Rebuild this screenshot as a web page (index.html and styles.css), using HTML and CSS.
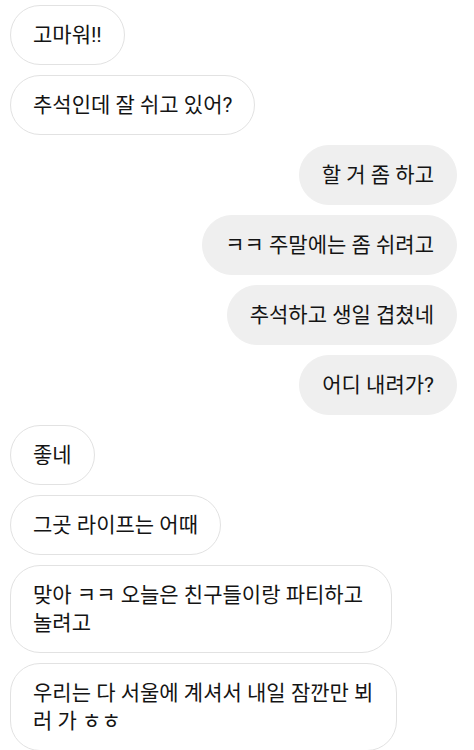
FILE: index.html
```html
<!DOCTYPE html>
<html lang="ko">
<head>
<meta charset="utf-8">
<link rel="stylesheet" href="styles.css">
</head>
<body>
<div class="chat">
  <div class="msg in">고마워!!</div>
  <div class="msg in">추석인데 잘 쉬고 있어?</div>
  <div class="msg out">할 거 좀 하고</div>
  <div class="msg out">ㅋㅋ 주말에는 좀 쉬려고</div>
  <div class="msg out">추석하고 생일 겹쳤네</div>
  <div class="msg out">어디 내려가?</div>
  <div class="msg in">좋네</div>
  <div class="msg in">그곳 라이프는 어때</div>
  <div class="msg in multi">맞아 ㅋㅋ 오늘은 친구들이랑 파티하고<br>놀려고</div>
  <div class="msg in multi wider">우리는 다 서울에 계셔서 내일 잠깐만 뵈<br>러 가 ㅎㅎ</div>
</div>
</body>
</html>
```
FILE: styles.css
```css
html, body {
  margin: 0;
  padding: 0;
  background: #ffffff;
}
body {
  width: 474px;
  height: 750px;
  overflow: hidden;
  font-family: Roboto, "Noto Sans CJK KR", sans-serif;
  font-size: 21px;
  color: #141414;
}
.chat {
  display: flex;
  flex-direction: column;
  gap: 10px;
  padding: 5px 17px 0 10px;
}
.msg {
  box-sizing: border-box;
  padding: 15px 22px;
  line-height: 28px;
  border-radius: 30px;
  border: 1.5px solid #e2e2e2;
  white-space: nowrap;
}
.in {
  align-self: flex-start;
  background: #ffffff;
}
.out {
  align-self: flex-end;
  background: #efefef;
  border-color: #efefef;
}
.multi {
  width: 382px;
}
.wider {
  width: 387px;
}
```
